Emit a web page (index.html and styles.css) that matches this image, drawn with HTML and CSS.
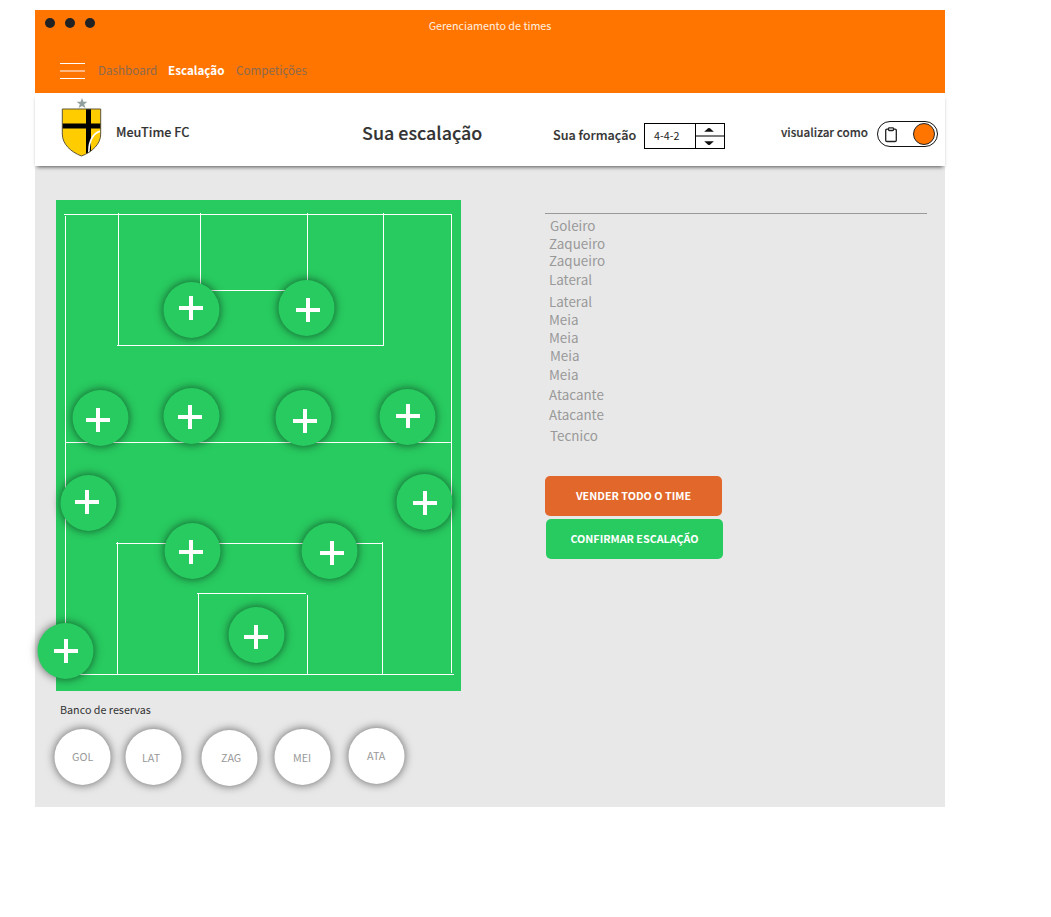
FILE: index.html
```html
<!DOCTYPE html>
<html lang="pt-BR">
<head>
<meta charset="utf-8">
<title>Gerenciamento de times</title>
<link rel="stylesheet" href="styles.css">
</head>
<body>
<div class="window">
  <header class="topbar">
    <div class="titlebar">
      <div class="dots"><i></i><i></i><i></i></div>
      <span class="app-title">Gerenciamento de times</span>
    </div>
    <nav class="nav">
      <svg class="menu" width="25" height="16" viewBox="0 0 25 16"><path d="M0 .5h25M0 15.5h25" stroke="#fff"/><path d="M0 8h25" stroke="#ffb980" stroke-width="2"/></svg>
      <a class="nav-dash">Dashboard</a>
      <a class="nav-esc">Escalação</a>
      <a class="nav-comp">Competições</a>
    </nav>
  </header>
  <section class="teambar">
    <svg class="crest" width="42" height="60" viewBox="0 0 42 60">
      <path d="M21 0l1.400 3.700 4 .1-3.200 2.500 1.200 3.800L21 7.900l-3.400 2.200 1.200-3.800-3.200-2.500 4-.1z" fill="#91a09f"/>
      <clipPath id="shield"><path d="M1.300 11h38.400v25c0 10-8.500 18-19.200 22C9.800 54 1.300 46 1.300 36z"/></clipPath>
      <g clip-path="url(#shield)">
        <path d="M0 10h42v50H0z" fill="#fc0"/>
        <path d="M25 10h5v50h-5zM0 25.500h42v5H0z" fill="#000"/>
        <path d="M41 33c-8 1-14 9-13 24" fill="none" stroke="#fff" stroke-width="1.700"/>
      </g>
      <path d="M1.300 11h38.400v25c0 10-8.500 18-19.200 22C9.800 54 1.300 46 1.300 36z" fill="none" stroke="#5d5639"/>
    </svg>
    <span class="team-name">MeuTime FC</span>
    <h1 class="page-title">Sua escalação</h1>
    <span class="formation-label">Sua formação</span>
    <div class="stepper">
      <span class="stepper-value">4-4-2</span>
      <svg width="29" height="24" viewBox="0 0 29 24"><path d="M0 12h29" stroke="#777" stroke-width="2"/><path d="M8.500 7.500l4-3.500q1-.8 2 0l4 3.500zM8.500 17.500l4 3.500q1 .8 2 0l4-3.500z" fill="#111"/></svg>
    </div>
    <span class="view-label">visualizar como</span>
    <div class="toggle">
      <svg width="12" height="16" viewBox="0 0 12 16" fill="none" stroke="#222" stroke-width="1.300"><path d="M3.500 2.200H2Q.7 2.200.7 3.500v9.800q0 1.200 1.300 1.200h8q1.300 0 1.300-1.200V3.500q0-1.300-1.300-1.300H8.500"/><rect x="3.500" y=".8" width="5" height="2.700" rx=".8"/></svg>
      <i class="knob"></i>
    </div>
  </section>
  <main class="content">
    <section class="left">
      <div class="pitch">
        <svg class="lines" width="405" height="491" viewBox="56 200 405 491" fill="#fff" shape-rendering="crispEdges">
          <path d="M64 214h388v1H64zM65 216h1v458h-1zM451 214h1v459h-1zM66 674h388v1H66zM66 442h385v1H66z"/>
          <path d="M118 213h1v133h-1zM117 345h267v1H117zM383 213h1v133h-1zM200 213h1v78h-1zM200 290h108v1H200zM307 213h1v78h-1z"/>
          <path d="M116 543h267v1H116zM117 542h1v132h-1zM382 542h1v132h-1zM197 593h109v1H197zM198 593h1v80h-1zM307 595h1v79h-1z"/>
        </svg>
        <button class="slot s1"><i></i></button>
        <button class="slot s2"><i></i></button>
        <button class="slot s3"><i></i></button>
        <button class="slot s4"><i></i></button>
        <button class="slot s5"><i></i></button>
        <button class="slot s6"><i></i></button>
        <button class="slot s7"><i></i></button>
        <button class="slot s8"><i></i></button>
        <button class="slot s9"><i></i></button>
        <button class="slot s10"><i></i></button>
        <button class="slot s11"><i></i></button>
        <button class="slot s12"><i></i></button>
      </div>
      <h2 class="bench-title">Banco de reservas</h2>
      <div class="bench">
        <div class="reserve gol"><span>GOL</span></div>
        <div class="reserve lat"><span>LAT</span></div>
        <div class="reserve zag"><span>ZAG</span></div>
        <div class="reserve mei"><span>MEI</span></div>
        <div class="reserve ata"><span>ATA</span></div>
      </div>
    </section>
    <section class="right">
      <ul class="positions">
        <li class="indent">Goleiro</li>
        <li>Zaqueiro</li>
        <li>Zaqueiro</li>
        <li>Lateral</li>
        <li>Lateral</li>
        <li>Meia</li>
        <li>Meia</li>
        <li class="indent">Meia</li>
        <li>Meia</li>
        <li>Atacante</li>
        <li>Atacante</li>
        <li class="indent">Tecnico</li>
      </ul>
      <button class="action sell">VENDER TODO O TIME</button>
      <button class="action confirm">CONFIRMAR ESCALAÇÃO</button>
    </section>
  </main>
</div>
</body>
</html>
```
FILE: styles.css
```css
* { box-sizing: border-box; }
body {
  margin: 0;
  padding: 10px 0 0 35px;
  background: #fff;
  color: #333;
  font-family: "Noto Sans CJK SC", "Noto Sans", sans-serif;
  font-size: 12px;
  line-height: 20px;
}
h1, h2, ul { margin: 0; padding: 0; list-style: none; }
svg { display: block; flex: none; }
span, a, h1, h2, li { white-space: nowrap; }

.window { width: 910px; height: 797px; background: #e8e8e8; }

.topbar { height: 83px; background: #ff7500; }
.titlebar { display: grid; grid-template-columns: 1fr auto 1fr; height: 43px; padding: 6px 10px 0; }
.dots { display: flex; gap: 10px; padding-top: 2px; }
.dots i { width: 10px; height: 10px; border-radius: 50%; background: #222; }
.app-title { color: #fff0e0; font-size: 10.760px; }
.nav { display: flex; padding: 7px 0 0 25px; font-size: 11.650px; }
.menu { margin: 3px 13px 0 0; }
.nav a { color: #8a6a50; }
.nav-dash { width: 70px; }
.nav .nav-esc { width: 68px; color: #fff; font-weight: 700; }

.teambar {
  display: flex;
  position: relative;
  height: 73px;
  padding: 5px 0 0 26px;
  background: #fff;
  box-shadow: 0 3px 4px -2px rgba(0, 0, 0, .65);
}
.team-name, .page-title, .formation-label, .view-label {
  font-weight: 500;
  -webkit-text-stroke: .15px #333;
}
.team-name { width: 246px; margin: 24px 0 0 13px; font-size: 12.600px; }
.page-title { width: 191px; margin-top: 24px; font-size: 17.900px; }
.formation-label { width: 91px; margin-top: 27px; font-size: 12.600px; }
.stepper { display: flex; width: 81px; height: 26px; margin-top: 25px; border: 1px solid #000; }
.stepper-value { flex: none; width: 50px; padding: 2px 0 0 9px; color: #222; font-size: 10.760px; }
.stepper svg { border-left: 1px solid #000; }
.view-label { width: 96px; margin: 24px 0 0 56px; font-size: 11.700px; }
.toggle {
  display: flex;
  justify-content: space-between;
  width: 61px;
  height: 26px;
  margin-top: 23px;
  padding: 1px 2px 0 7px;
  border: 1px solid #111;
  border-radius: 13px;
}
.toggle svg { margin-top: 4px; }
.knob { width: 22px; height: 22px; border: 1px solid #222; border-radius: 50%; background: #ff7500; }

.content { display: flex; gap: 84px; padding: 34px 0 0 21px; }
.left { width: 405px; }
.pitch { position: relative; height: 491px; background: #28cb60; }
.slot {
  position: absolute;
  width: 56px;
  height: 56px;
  padding: 0;
  border: 0;
  background: none;
}
/* disc, shifted by half a pixel from its box */
.slot::before, .reserve::before {
  content: "";
  position: absolute;
  inset: 0;
  border-radius: 50%;
  background: #28cb60;
  box-shadow: 0 0 10px rgba(0, 0, 0, .6);
  transform: translateX(.5px);
}
/* plus sign drawn with two crossing bars */
.slot i {
  position: absolute;
  width: 24px;
  height: 24px;
  background:
    linear-gradient(#fff, #fff) 0 10px / 24px 4px no-repeat,
    linear-gradient(#fff, #fff) 10px 0 / 4px 24px no-repeat;
}
.s1 { left: 107px; top: 82px; }   .s1 i { left: 16px; top: 14px; }
.s2 { left: 222px; top: 80px; }   .s2 i { left: 18px; top: 18px; }
.s3 { left: 16px; top: 190px; }   .s3 i { left: 14px; top: 18px; }
.s4 { left: 107px; top: 188px; }  .s4 i { left: 15px; top: 17px; }
.s5 { left: 219px; top: 190px; }  .s5 i { left: 18px; top: 19px; }
.s6 { left: 323px; top: 189px; }  .s6 i { left: 17px; top: 15px; }
.s7 { left: 4px; top: 275px; }    .s7 i { left: 15px; top: 15px; }
.s8 { left: 340px; top: 274px; }  .s8 i { left: 17px; top: 17px; }
.s9 { left: 108px; top: 323px; }  .s9 i { left: 15px; top: 17px; }
.s10 { left: 245px; top: 323px; } .s10 i { left: 19px; top: 18px; }
.s11 { left: 172px; top: 407px; } .s11 i { left: 16px; top: 18px; }
.s12 { left: -19px; top: 423px; } .s12 i { left: 17px; top: 16px; }

.bench-title { margin: 9px 0 0 4px; font-size: 10.760px; font-weight: 400; line-height: 20px; }
.bench { display: flex; padding-top: 8px; margin-left: -2px; }
.reserve {
  position: relative;
  flex: none;
  width: 56px;
  height: 56px;
  padding-top: 18px;
  color: #999;
  font-size: 10.760px;
  line-height: 20px;
}
.reserve::before { background: #fff; }
.reserve span { position: relative; }
.gol { margin-top: 1px; padding-left: 18px; }
.lat { margin: 1px 0 0 15px; padding: 19px 0 0 17px; }
.zag { margin: 2px 0 0 20px; padding-left: 20px; }
.mei { margin: 1px 0 0 17px; padding: 19px 0 0 19px; }
.ata { margin-left: 18px; padding-left: 19px; }

.right { width: 382px; padding-top: 13px; }
.positions {
  display: grid;
  grid-template-rows: 18px 17px 19px 22px 18px 18px 18px 19px 20px 20px 21px 20px;
  height: 263px;
  padding: 3px 0 0 4px;
  border-top: 1px solid #999;
  color: #999;
  font-size: 13.400px;
  line-height: 16px;
}
.positions .indent { padding-left: 1px; }
.action {
  display: block;
  width: 177px;
  height: 40px;
  border: 0;
  border-radius: 5px;
  padding: 0;
  color: #fff;
  font: 700 10.760px/20px "Noto Sans CJK SC", "Noto Sans", sans-serif;
}
.sell { background: #e2672a; }
.confirm { margin: 3px 0 0 1px; background: #28cb60; }
```
